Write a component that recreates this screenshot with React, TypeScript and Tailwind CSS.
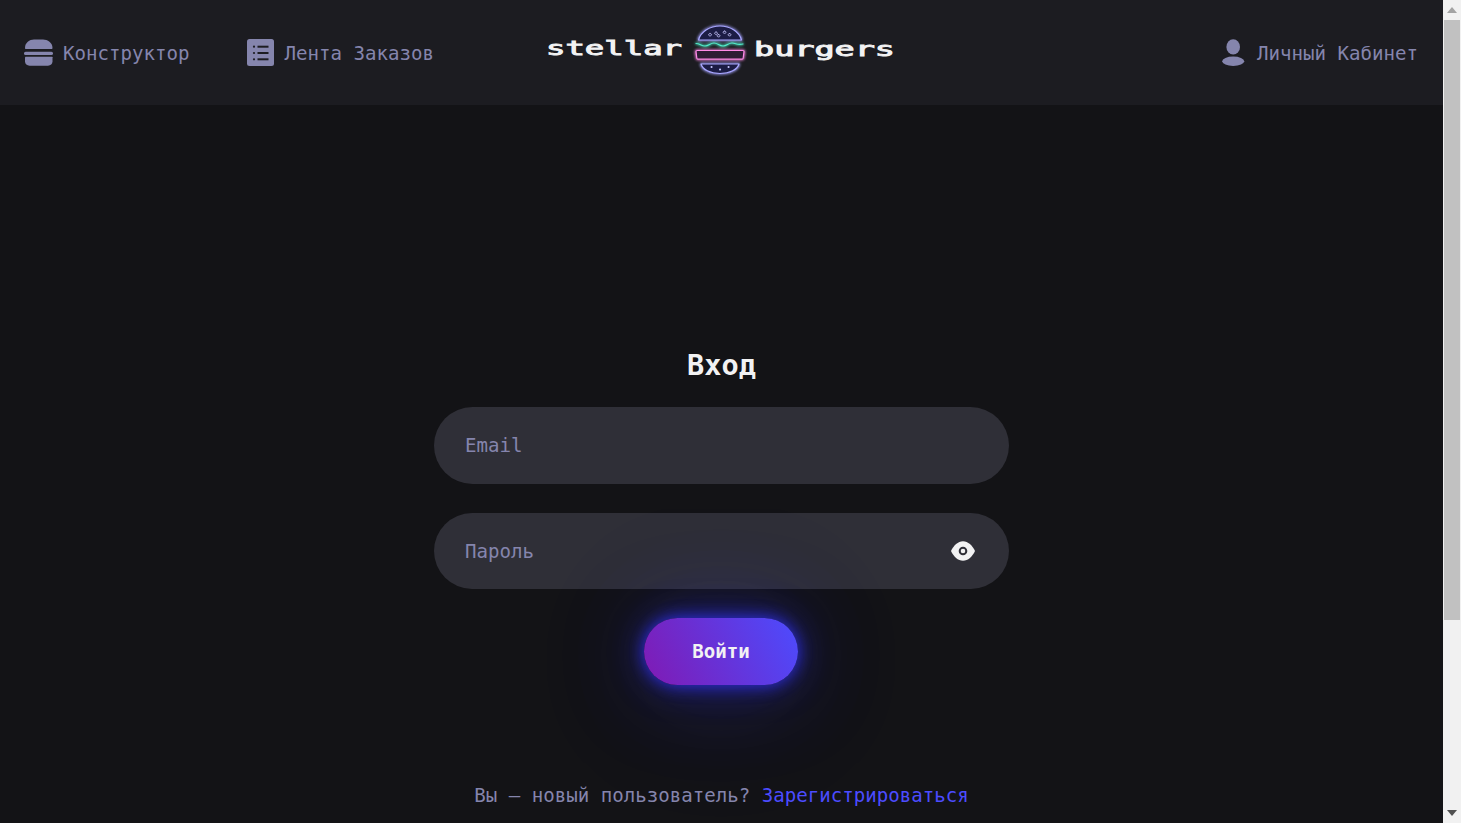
import { useState } from "react"

function BurgerIcon() {
  return (
    <svg width="30" height="28" viewBox="0 0 30 28" fill="#8585ad">
      <path d="M1 9C1 3.5 5.5 0.5 10 0.5h9c4.5 0 9.5 3 9.5 8.5 0 .8-.5 1-1 1H2c-.6 0-1-.3-1-1z" />
      <rect x="0" y="12.7" width="29" height="3.3" rx="1.6" />
      <path d="M1 18.2c0-.3.3-.5.6-.5h26.3c.3 0 .6.2.6.5v4.3c0 2.300-2 4.200-4.500 4.200H5.500C3 26.700 1 24.800 1 22.500z" />
    </svg>
  )
}

function ListIcon() {
  return (
    <svg width="27" height="27" viewBox="0 0 27 27">
      <rect x="0" y="0" width="27" height="27" rx="2.500" fill="#8585ad" />
      <g fill="#1c1c21">
        <circle cx="7" cy="7.700" r="1.100" />
        <circle cx="7" cy="14" r="1.100" />
        <circle cx="7" cy="20.300" r="1.100" />
        <rect x="10.500" y="6.700" width="11" height="2" />
        <rect x="10.500" y="13" width="11" height="2" />
        <rect x="10.500" y="19.300" width="11" height="2" />
      </g>
    </svg>
  )
}

function UserIcon() {
  return (
    <svg width="23" height="27" viewBox="0 0 23 27" fill="#8585ad">
      <ellipse cx="11.200" cy="7.900" rx="6.800" ry="7.700" />
      <ellipse cx="11.200" cy="22.300" rx="11" ry="4.700" />
    </svg>
  )
}

function EyeIcon() {
  return (
    <svg width="24" height="20" viewBox="0 0 24 20">
      <path d="M0 10C2.500 4.500 7 0.200 12 0.200S21.500 4.500 24 10c-2.500 5.500-7 9.800-12 9.800S2.500 15.500 0 10z" fill="#f2f2f3" />
      <circle cx="12" cy="10" r="3.300" fill="none" stroke="#2f2f37" strokeWidth="2" />
    </svg>
  )
}

function Logo() {
  return (
    <svg width="348" height="60" viewBox="547 22.500 348 60">
      <defs>
        <filter id="neon" x="-30%" y="-30%" width="160%" height="160%">
          <feGaussianBlur stdDeviation="1.500" result="b" />
          <feMerge>
            <feMergeNode in="b" />
            <feMergeNode in="b" />
            <feMergeNode in="SourceGraphic" />
          </feMerge>
        </filter>
      </defs>
      <text x="546" y="54" textLength="136" lengthAdjust="spacingAndGlyphs" fontFamily="'DejaVu Sans Mono'" fontSize="19" fill="#f2f2f3" stroke="#f2f2f3" strokeWidth="0.900">
        stellar
      </text>
      <text x="754" y="55" textLength="141" lengthAdjust="spacingAndGlyphs" fontFamily="'DejaVu Sans Mono'" fontSize="19" fill="#f2f2f3" stroke="#f2f2f3" strokeWidth="0.900">
        burgers
      </text>
      <g fill="none" filter="url(#neon)" strokeWidth="1.200" strokeLinecap="round" strokeLinejoin="round">
        <path d="M698.500 39.500C701 31 710 25.500 720 25.500s19 5.500 21.500 14z" stroke="#a8a6ff" fill="#1f1f44" />
        <path d="M716 31.500a1.500 1.200 0 1 0 .1 0M724.500 30.500a1.500 1.200 0 1 0 .1 0M710 33a1.500 1.200 0 1 0 .1 0M729.500 33a1.500 1.200 0 1 0 .1 0M718.500 34a1.500 1.200 0 1 0 .1 0" stroke="#c4c3ff" strokeWidth="0.800" />
        <path d="M696 43c4 0 5 2.500 9 2.500s5-3 9-3 5 3 9 3 5-3 9-3 5 2.500 11 1" stroke="#52eccb" />
        <path d="M697 50h46c.8 0 1 .5 1 1l-.8 6.500c-.1.800-.6 1.200-1.200 1.200h-44c-.6 0-1.100-.4-1.200-1.200L696 51c0-.5.200-1 1-1z" stroke="#ff8ae8" fill="#2e1c34" />
        <path d="M701 63.500h38c-1.500 5.500-9 9.500-19 9.500s-17.500-4-19-9.500z" stroke="#a8a6ff" fill="#1f1f44" />
        <path d="M711.500 66.500h.1M720 69h.1M728.500 66.500h.1" stroke="#c4c3ff" strokeWidth="2" />
      </g>
    </svg>
  )
}

function NavItem({ icon, label, gap }: { icon: React.ReactNode; label: string; gap: string }) {
  return (
    <a href="#" className={`flex items-center ${gap} text-[#8585ad]`}>
      {icon}
      <span className="relative top-[1px]">{label}</span>
    </a>
  )
}

export default function App() {
  const [email, setEmail] = useState("")
  const [password, setPassword] = useState("")

  return (
    <div className="flex h-screen overflow-hidden bg-[#131316] font-['DejaVu_Sans_Mono',monospace] text-[19.1px] leading-6">
      <div className="flex min-w-0 flex-1 flex-col">
        <header className="grid h-[105px] shrink-0 grid-cols-[1fr_auto_1fr] items-center bg-[#1c1c21] pr-[25px] pl-6">
          <nav className="flex items-center gap-[58px]">
            <NavItem icon={<BurgerIcon />} label="Конструктор" gap="gap-[9px]" />
            <NavItem icon={<ListIcon />} label="Лента Заказов" gap="gap-[10px]" />
          </nav>
          <a href="#" className="block">
            <Logo />
          </a>
          <div className="flex justify-end">
            <NavItem icon={<UserIcon />} label="Личный Кабинет" gap="gap-3" />
          </div>
        </header>

        <main className="flex flex-col items-center pt-[240px]">
          <h1 className="h-[40px] text-[28.6px] leading-[40px] font-bold text-[#f2f2f3]">Вход</h1>
          <form className="mt-[22px] flex w-[575px] flex-col items-center gap-[29px]">
            <input
              value={email}
              onChange={(e) => setEmail(e.target.value)}
              placeholder="Email"
              className="h-[77px] w-full rounded-[40px] bg-[#2f2f37] px-[31px] text-[#f2f2f3] outline-none placeholder:text-[#8585ad]"
            />
            <div className="flex h-[76px] w-full items-center rounded-[40px] bg-[#2f2f37] pr-[34px] pl-[31px]">
              <input
                type="password"
                value={password}
                onChange={(e) => setPassword(e.target.value)}
                placeholder="Пароль"
                className="min-w-0 flex-1 pt-[2px] text-[#f2f2f3] outline-none placeholder:text-[#8585ad]"
              />
              <EyeIcon />
            </div>
            <button
              type="button"
              className="mr-px h-[67px] w-[154px] rounded-[40px] bg-[linear-gradient(63deg,#801ab3,#4c4cff)] pt-px font-bold text-[#f2f2f3] shadow-[0_0_16px_#3333ffcc,0_0_36px_#3333ff66,0_4px_90px_#3333ff40,0_8px_150px_#3333ff22]"
            >
              Войти
            </button>
          </form>
          <p className="mt-[99px] text-[#8585ad]">
            Вы — новый пользователь? <a href="#" className="text-[#4c4cff]">Зарегистрироваться</a>
          </p>
        </main>
      </div>

      <aside className="flex w-[18px] shrink-0 flex-col items-center bg-[#f1f1f1] px-px">
        <div className="flex h-5 items-center justify-center">
          <svg width="10" height="6" viewBox="0 0 10 6">
            <path d="M5 0l5 6H0z" fill="#a3a3a3" />
          </svg>
        </div>
        <div className="h-[600px] w-full bg-[#c1c1c1]" />
        <div className="flex-1" />
        <div className="flex h-5 items-center justify-center">
          <svg width="10" height="6" viewBox="0 0 10 6">
            <path d="M0 0h10L5 6z" fill="#505050" />
          </svg>
        </div>
      </aside>
    </div>
  )
}
